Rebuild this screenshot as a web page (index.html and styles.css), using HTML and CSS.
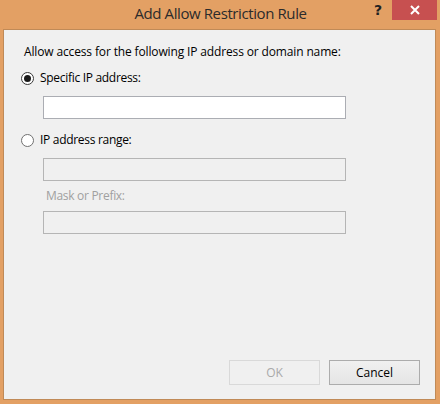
FILE: index.html
```html
<!DOCTYPE html>
<html>
<head>
<meta charset="utf-8">
<link rel="stylesheet" href="styles.css">
</head>
<body>
<div class="window">
  <div class="titlebar">
    <div class="title">Add Allow Restriction Rule</div>
    <div class="help">?</div>
    <div class="close">
      <svg width="12" height="10" viewBox="0 0 12 10"><path d="M2 1 L10 9 M10 1 L2 9" stroke="#fff" stroke-width="2" fill="none"/></svg>
    </div>
  </div>
  <div class="client">
    <div class="heading">Allow access for the following IP address or domain name:</div>
    <div class="radio-row row1">
      <span class="radio checked"><span class="dot"></span></span>
      <span class="label">Specific IP address:</span>
    </div>
    <div class="input in1"></div>
    <div class="radio-row row2">
      <span class="radio"></span>
      <span class="label">IP address range:</span>
    </div>
    <div class="input disabled in2"></div>
    <div class="sublabel">Mask or Prefix:</div>
    <div class="input disabled in3"></div>
    <div class="spacer"></div>
    <div class="buttons">
      <div class="btn disabled">OK</div>
      <div class="btn">Cancel</div>
    </div>
  </div>
</div>
</body>
</html>
```
FILE: styles.css
```css
html, body {
  margin: 0;
  padding: 0;
}
body {
  width: 440px;
  height: 404px;
  overflow: hidden;
  font-family: "Open Sans", "Noto Sans", sans-serif;
}
.window {
  width: 440px;
  height: 404px;
  background: #e3a064;
  display: flex;
  flex-direction: column;
  box-sizing: border-box;
  padding: 0 4px 4px 3px;
}
.titlebar {
  height: 29px;
  position: relative;
  flex: none;
}
.title {
  text-align: center;
  font-size: 15px;
  line-height: 27px;
  color: #2b2b2b;
  padding-left: 2px;
  letter-spacing: -0.4px;
}
.help {
  position: absolute;
  left: 371px;
  top: 2px;
  font-size: 14px;
  font-weight: bold;
  color: #222;
  font-family: "DejaVu Sans", sans-serif;
}
.close {
  position: absolute;
  left: 389px;
  top: 0;
  width: 45px;
  height: 20px;
  background: #c75050;
  display: flex;
  align-items: center;
  justify-content: center;
}
.client {
  flex: 1;
  background: #f0f0f0;
  border: 1px solid #c08a57;
  display: flex;
  flex-direction: column;
  padding: 14px 15px 14px 20px;
  font-size: 12px;
  color: #000;
}
.heading {
  height: 16px;
  line-height: 16px;
  letter-spacing: -0.14px;
}
.radio-row {
  display: flex;
  align-items: center;
  height: 16px;
  margin-left: -3px;
}
.row1 { margin-top: 10px; }
.row2 { margin-top: 13px; }
.radio {
  width: 11px;
  height: 11px;
  border: 1px solid #3a3a3a;
  border-radius: 50%;
  background: #fff;
  display: flex;
  align-items: center;
  justify-content: center;
  margin-right: 6px;
}
.row2 .radio {
  border-color: #707070;
}
.dot {
  width: 7px;
  height: 7px;
  border-radius: 50%;
  background: #1a1a1a;
}
.label {
  line-height: 16px;
  letter-spacing: -0.3px;
}
.input {
  box-sizing: border-box;
  height: 23px;
  width: 303px;
  margin-left: 19px;
  border: 1px solid #abadb3;
  background: #fff;
}
.in1 { margin-top: 10px; }
.in2 { margin-top: 10px; }
.in3 { margin-top: 7px; }
.input.disabled {
  background: #f0f0f0;
  border-color: #b5b5b5;
}
.sublabel {
  margin-top: 7px;
  margin-left: 22px;
  height: 16px;
  line-height: 16px;
  color: #a0a0a0;
  letter-spacing: -0.3px;
}
.spacer { flex: 1; }
.buttons {
  display: flex;
  justify-content: flex-end;
  gap: 9px;
}
.btn {
  box-sizing: border-box;
  width: 91px;
  height: 25px;
  border: 1px solid #acacac;
  background: linear-gradient(#f0f0f0, #e5e5e5);
  display: flex;
  align-items: center;
  justify-content: center;
  color: #000;
}
.btn.disabled {
  border-color: #d9d9d9;
  background: #f0f0f0;
  color: #a9a9a9;
}
```
